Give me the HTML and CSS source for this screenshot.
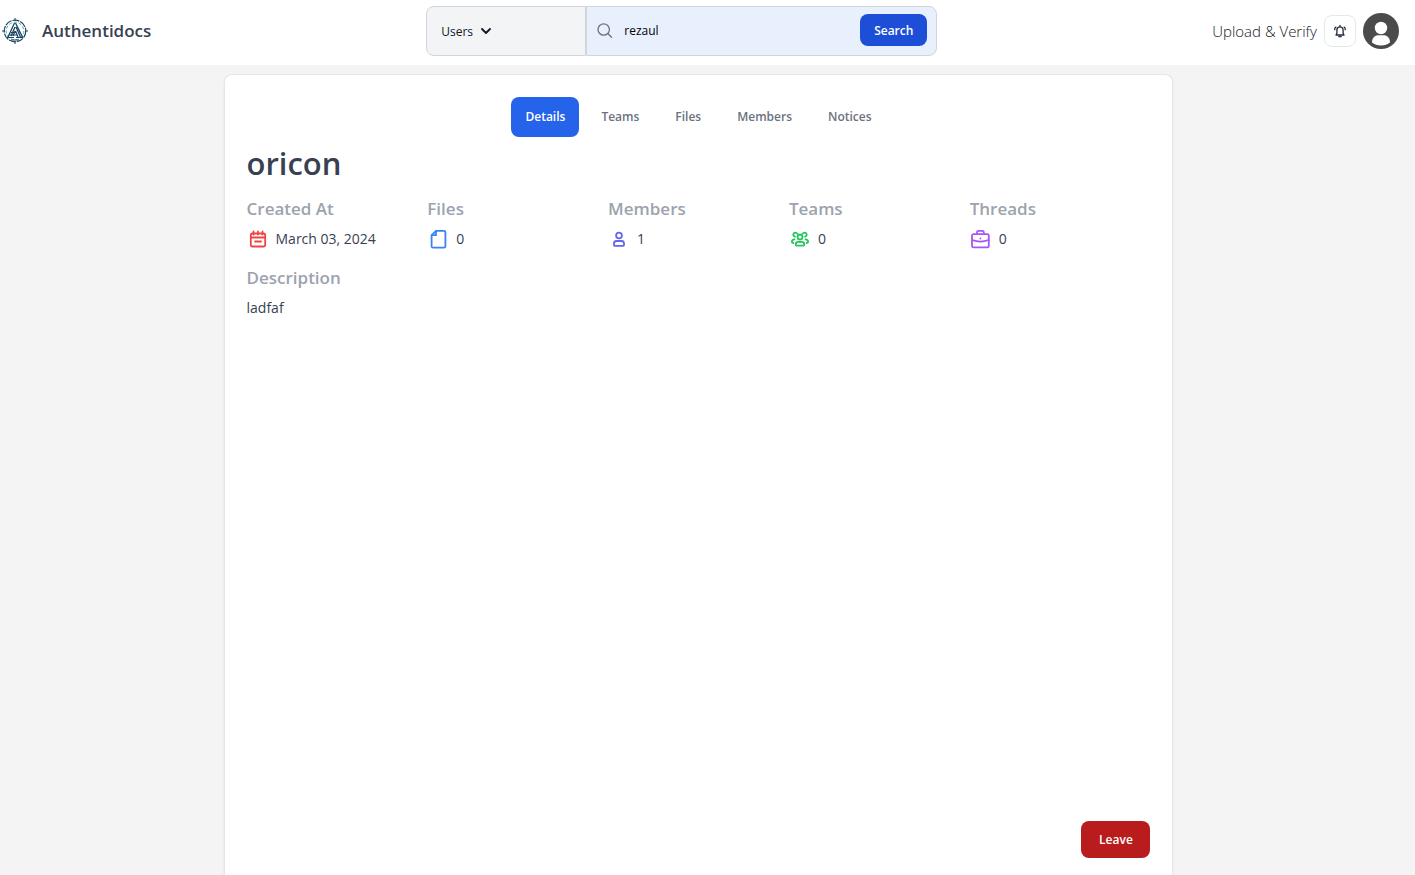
FILE: index.html
```html
<!DOCTYPE html>
<html lang="en">
<head>
<meta charset="utf-8">
<meta name="viewport" content="width=device-width, initial-scale=1">
<title>Authentidocs</title>
<link rel="stylesheet" href="styles.css">
</head>
<body>
<header class="topbar">
  <a class="brand" href="#">
    <svg class="brand-logo" viewBox="0 0 26 26" fill="none" stroke="#1c4560" aria-hidden="true">
      <circle cx="13" cy="13" r="10.800" stroke-width="1.200" stroke-dasharray="7 1"/>
      <circle cx="13" cy="13" r="8.800" stroke="#4fa3c4" stroke-width="1" stroke-dasharray="3 2"/>
      <path d="M13 0v3M13 23v3M0 13h3M23 13h3" stroke-width="1"/>
      <path d="M12.500 5 6 19M13.500 5 20.500 19M13 9 9 18M14 9l4.500 10M13 13l-2 5M13.500 13l2.500 6" stroke-width="1.300"/>
      <path d="M9 14.500h5M7 17h8M5 19.500h7M14 19.500h7M9 22h8" stroke-width="1.200"/>
    </svg>
    <span>Authentidocs</span>
  </a>
  <form class="search" role="search">
    <div class="scope">
      <select class="scope-select" aria-label="Search in">
        <option>Users</option>
        <option>Teams</option>
        <option>Files</option>
      </select>
      <svg class="scope-arrow" viewBox="0 0 10 6" fill="none" stroke="#111827" stroke-width="1.800" stroke-linecap="round" stroke-linejoin="round" aria-hidden="true"><path d="m1 1 4 4 4-4"/></svg>
    </div>
    <div class="query">
      <svg class="query-icon" viewBox="0 0 16 16" fill="none" stroke="#6b7280" stroke-width="1.300" stroke-linecap="round" aria-hidden="true"><circle cx="6.700" cy="7.500" r="5.700"/><path d="m11 11.800 3.500 3.500"/></svg>
      <input class="query-input" type="text" value="rezaul" aria-label="Search text">
      <button class="search-button" type="button">Search</button>
    </div>
  </form>
  <nav class="actions" aria-label="Account">
    <a class="upload" href="#">Upload &amp; Verify</a>
    <button class="bell" type="button" aria-label="Notifications">
      <svg viewBox="0 0 14 14" fill="none" stroke="#1f2937" stroke-width="1.300" stroke-linecap="round" stroke-linejoin="round" aria-hidden="true"><path d="M3 11h8l-.9-1.800V6a3.100 3.100 0 0 0-6.200 0v3.200ZM7 2.700V1.500M5.800 12.700h2.400M1.700 5.700c0-1.200.4-2 1.200-2.600M12.300 5.700c0-1.200-.4-2-1.200-2.600"/></svg>
    </button>
    <button class="avatar" type="button" aria-label="Profile">
      <svg viewBox="0 0 36 36" aria-hidden="true"><circle cx="18" cy="18" r="18" fill="#4b4b4b"/><circle cx="18" cy="15" r="6.200" fill="#fff"/><path d="M9 29.500c0-4.500 2.800-7.200 6.500-7.200h5c3.700 0 6.500 2.700 6.500 7.200-2.400 2-5.500 3-9 3s-6.600-1-9-3Z" fill="#fff"/></svg>
    </button>
  </nav>
</header>
<main class="page">
  <section class="card">
    <nav class="tabs" aria-label="Sections">
      <button class="tab tab-active" type="button">Details</button>
      <button class="tab" type="button">Teams</button>
      <button class="tab" type="button">Files</button>
      <button class="tab" type="button">Members</button>
      <button class="tab" type="button">Notices</button>
    </nav>
    <h1 class="title">oricon</h1>
    <div class="stats">
      <div>
        <h2 class="label">Created At</h2>
        <p class="value">
          <svg class="icon red" viewBox="0 0 22 22" aria-hidden="true"><rect x="3.800" y="5.500" width="14.400" height="13" rx="1.500"/><path d="M4 9.500h14M6.500 3.500v3M11 3.500v3M15.500 3.500v3M8 13.500h6"/></svg>
          <span>March 03, 2024</span>
        </p>
      </div>
      <div>
        <h2 class="label">Files</h2>
        <p class="value">
          <svg class="icon blue" viewBox="0 0 22 22" aria-hidden="true"><path d="M9 2.800h8a1.400 1.400 0 0 1 1.400 1.400v14a1.400 1.400 0 0 1-1.400 1.400H6a1.400 1.400 0 0 1-1.400-1.400V7.200Z"/><path d="M9 3v4.200H4.800"/></svg>
          <span>0</span>
        </p>
      </div>
      <div>
        <h2 class="label">Members</h2>
        <p class="value">
          <svg class="icon indigo" viewBox="0 0 22 22" aria-hidden="true"><circle cx="11" cy="7.500" r="2.900"/><path d="M8.500 13h5a2.500 2.500 0 0 1 2.500 2.500V17a.9.900 0 0 1-.9.900H6.900A.9.900 0 0 1 6 17v-1.500A2.500 2.500 0 0 1 8.500 13Z"/></svg>
          <span>1</span>
        </p>
      </div>
      <div>
        <h2 class="label">Teams</h2>
        <p class="value">
          <svg class="icon green" viewBox="0 0 22 22" aria-hidden="true"><circle cx="11" cy="9" r="2.500"/><path d="M9.300 13.800h3.400c1.500 0 2.600 1.200 2.600 2.600 0 .7-.4 1.200-1.100 1.200H7.800c-.7 0-1.100-.5-1.100-1.200 0-1.400 1.100-2.600 2.600-2.600ZM6 8.700a2.100 2.100 0 1 1 2.200-3.100M16 8.700a2.100 2.100 0 1 0-2.200-3.100M5.500 11.300c-1.600 0-2.600 1.200-2.600 2.800 0 .6.400.9 1.400.9M16.500 11.300c1.600 0 2.600 1.200 2.600 2.800 0 .6-.4.900-1.400.9"/></svg>
          <span>0</span>
        </p>
      </div>
      <div>
        <h2 class="label">Threads</h2>
        <p class="value">
          <svg class="icon purple" viewBox="0 0 22 22" aria-hidden="true"><rect x="2" y="6.200" width="16.800" height="13.200" rx="1.500"/><path d="M7 6V4.200a1.400 1.400 0 0 1 1.400-1.400h4a1.400 1.400 0 0 1 1.400 1.400V6M2.200 12c5 1.900 11.400 1.900 16.400 0M10.400 10.400v.1"/></svg>
          <span>0</span>
        </p>
      </div>
    </div>
    <h2 class="label">Description</h2>
    <p class="value">ladfaf</p>
    <button class="leave" type="button">Leave</button>
  </section>
</main>
</body>
</html>
```
FILE: styles.css
```css
* { box-sizing: border-box; }

body {
  margin: 0;
  min-height: 100vh;
  display: flex;
  flex-direction: column;
  background: #f4f4f4;
  color: #374151;
  font-family: "Segoe UI", "Open Sans", "Noto Sans", sans-serif;
  font-size: 14px;
}

h1, h2, p { margin: 0; }
button, input, select { font: inherit; margin: 0; }
button { border: 0; padding: 0; cursor: pointer; }
a { color: inherit; text-decoration: none; }
svg { display: block; flex: none; }

.topbar {
  display: flex;
  align-items: center;
  justify-content: space-between;
  padding: 6px 16px 9px 2px;
  background: #fff;
}

.brand {
  display: flex;
  align-items: center;
  gap: 14px;
  font-size: 17px;
  font-weight: 600;
  line-height: 24px;
}
.brand-logo { width: 26px; height: 26px; }

.search {
  display: flex;
  flex: 0 1 511px;
  height: 50px;
  font-size: 12px;
  color: #111;
}
.scope {
  flex: 0 0 160px;
  display: grid;
  align-items: center;
  background: #f3f4f6;
  border: 1px solid #d1d5db;
  border-radius: 8px 0 0 8px;
}
.scope-select {
  grid-area: 1 / 1;
  height: 100%;
  padding: 0 14px;
  border: 0;
  background: none;
  color: #111827;
  appearance: none;
  font-weight: 500;
}
.scope-arrow {
  grid-area: 1 / 1;
  width: 10px;
  height: 6px;
  margin-left: 54px;
  pointer-events: none;
}
.query {
  flex: 1;
  display: flex;
  align-items: center;
  padding: 0 9px 2px 10px;
  background: #e8f0fe;
  border: 1px solid #d1d5db;
  border-radius: 0 8px 8px 0;
}
.query-icon { width: 16px; height: 16px; }
.query-input {
  flex: 1;
  min-width: 0;
  padding: 0 11px;
  border: 0;
  outline: 0;
  background: none;
  color: #000;
}
.search-button {
  width: 67px;
  height: 32px;
  border-radius: 8px;
  background: #1d4ed8;
  color: #fff;
  font-weight: 600;
}

.actions { display: flex; align-items: center; gap: 7px; }
.upload { color: #111827; font-size: 15px; font-weight: 300; }
.bell {
  display: grid;
  place-items: center;
  width: 32px;
  height: 32px;
  border: 1px solid #e5e7eb;
  border-radius: 8px;
  background: #fff;
}
.bell svg { width: 14px; height: 14px; }
.avatar { border-radius: 50%; background: none; }
.avatar svg { width: 36px; height: 36px; }

.page {
  flex: 1;
  display: flex;
  justify-content: center;
  padding: 9px 18px 0 0;
}
.card {
  display: flex;
  flex-direction: column;
  width: 68%;
  padding: 22px 22px 17px;
  border: 1px solid #e5e7eb;
  border-bottom: 0;
  border-radius: 8px 8px 0 0;
  background: #fff;
  box-shadow: 0 1px 3px #0000000f;
}

.tabs {
  display: flex;
  justify-content: center;
  gap: 8px;
}
.tab {
  height: 40px;
  padding: 0 14px 2px;
  border-radius: 8px;
  background: none;
  color: #6b7280;
  font-size: 12px;
  font-weight: 600;
}
.tab-active { background: #2563eb; color: #fff; }

.title {
  font-size: 31px;
  font-weight: 600;
  line-height: 40px;
  margin: 6px 0 12px;
}
.stats {
  display: grid;
  grid-template-columns: repeat(5, 1fr);
  margin-bottom: 13px;
}
.label {
  color: #9ca3af;
  font-size: 17px;
  font-weight: 600;
  line-height: 28px;
}
.value {
  display: flex;
  align-items: center;
  gap: 7px;
  padding-top: 3px;
  font-size: 14px;
  font-weight: 500;
  line-height: 25px;
}
.icon {
  width: 22px;
  height: 22px;
  fill: none;
  stroke: currentColor;
  stroke-width: 1.8;
  stroke-linecap: round;
  stroke-linejoin: round;
}
.red { color: #ef4444; }
.blue { color: #3b82f6; }
.indigo { color: #6366f1; }
.green { color: #22c55e; }
.purple { color: #a855f7; }

.leave {
  align-self: flex-end;
  width: 69px;
  height: 37px;
  margin-top: auto;
  border-radius: 8px;
  background: #b91c1c;
  color: #fff;
  font-size: 12px;
  font-weight: 600;
}
```
